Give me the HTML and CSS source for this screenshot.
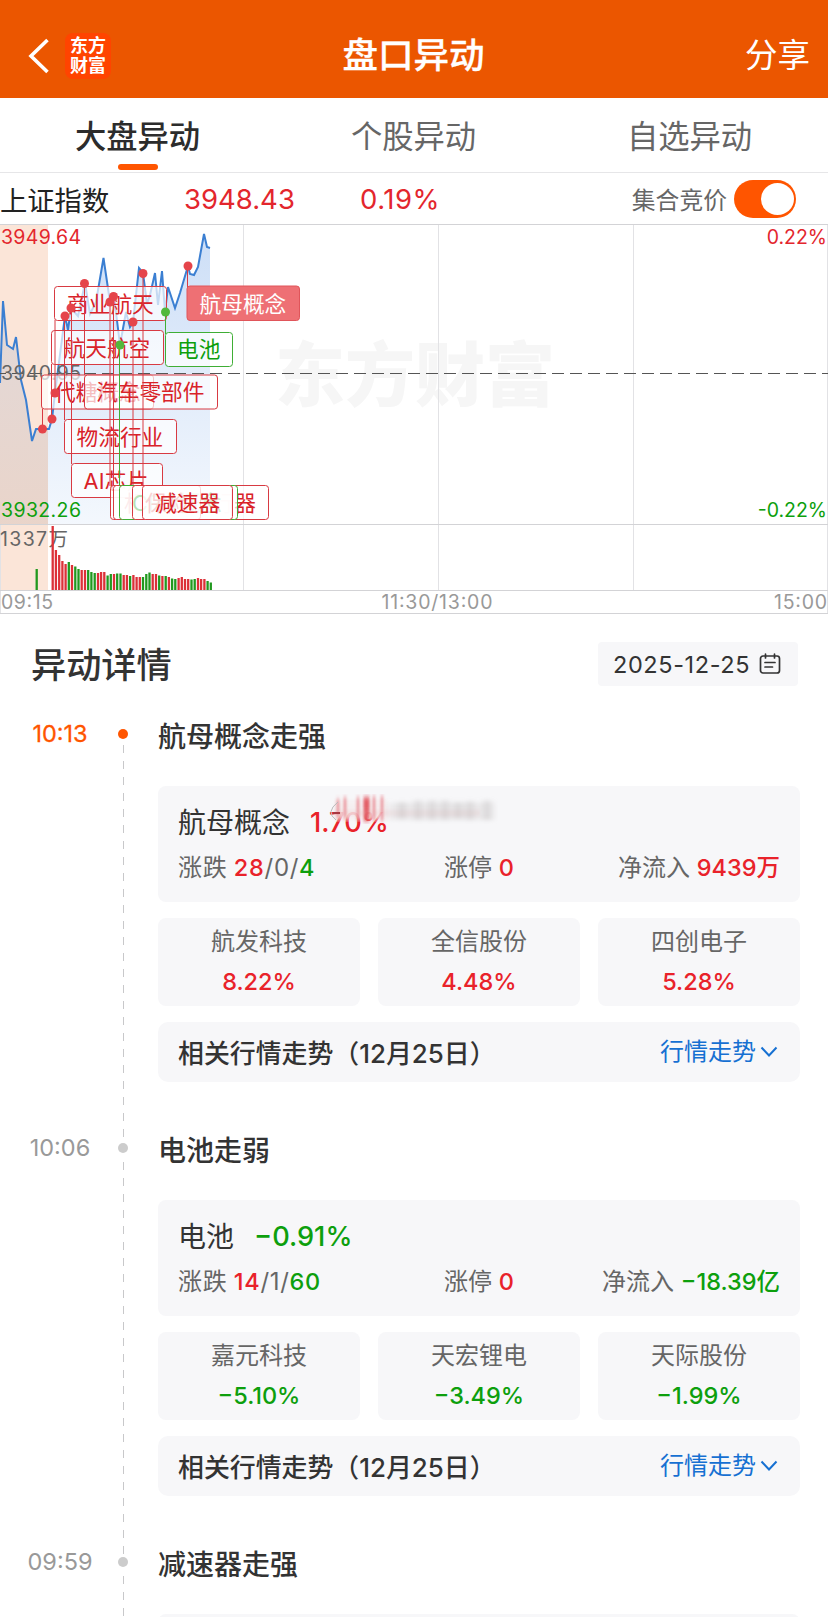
FILE: index.html
```html
<!DOCTYPE html>
<html lang="zh-CN">
<head>
<meta charset="utf-8">
<title>盘口异动</title>
<link rel="stylesheet" href="styles.css">
</head>
<body>
<header class="topbar">
  <div class="topbar-left">
    <svg class="back" width="22" height="36" viewBox="0 0 22 36"><path d="M20.500 2 4 18l16.500 16" fill="none" stroke="#fff" stroke-width="3.600"/></svg>
    <div class="logo"><span>东方</span><span>财富</span></div>
  </div>
  <h1>盘口异动</h1>
  <div class="share">分享</div>
</header>
<nav class="tabs">
  <div class="tab active">大盘异动</div>
  <div class="tab">个股异动</div>
  <div class="tab">自选异动</div>
</nav>
<section class="quote">
  <span class="index-name">上证指数</span>
  <span class="index-price">3948.43</span>
  <span class="index-pct">0.19%</span>
  <span class="auction">集合竞价</span>
  <span class="toggle"></span>
</section>
<svg class="chart" width="828" height="390" viewBox="0 224 828 390">
  <defs>
    <linearGradient id="area" x1="0" y1="0" x2="0" y2="1">
      <stop offset="0" stop-color="#3f83e0" stop-opacity=".26"/>
      <stop offset="1" stop-color="#3f83e0" stop-opacity=".06"/>
    </linearGradient>
    <linearGradient id="bandshade" x1="0" y1="0" x2="0" y2="1">
      <stop offset="0" stop-color="#c9ccd8" stop-opacity=".5"/>
      <stop offset="1" stop-color="#d8c4bc" stop-opacity=".5"/>
    </linearGradient>
  </defs>
  <text class="watermark" x="275" y="401" textLength="280">东方财富</text>
  <path d="M0 225H48V590H0Z" fill="#fbe5d8"/>
  <g stroke="#e2e2e5" fill="none">
    <path d="M243.500 224V590M438.500 224V590M633.500 224V590M.500 524V613M827.500 224V613"/>
    <path stroke="#d3d3d6" d="M0 224.500H828M0 524.500H828M0 590.500H828M0 613.500H828"/>
  </g>
  <path d="M0 383 3 301 7 345 13 349 16 337 21 380 26 400 32 441 36 429H48V524H0Z" fill="url(#bandshade)"/>
  <path d="M48 429 52 419 55 393 65 316 68 330 71 308 78 316 85 283 90 314 96 302 103.500 258 110 302 114 296 120 345 126 312 130 327 133 322 139 268 143 273 147 304 150 295 155 273 158 305 162 271 165 312 168 287 175 308 180 293 188 266 190 274 194 275 198 267 204 234 207 247 210 248V524H48Z" fill="url(#area)"/>
  <path d="M0 383 3 301 7 345 13 349 16 337 21 380 26 400 32 441 36 429H49L52 419 55 393 65 316 68 330 71 308 78 316 85 283 90 314 96 302 103.500 258 110 302 114 296 120 345 126 312 130 327 133 322 139 268 143 273 147 304 150 295 155 273 158 305 162 271 165 312 168 287 175 308 180 293 188 266 190 274 194 275 198 267 204 234 207 247 210 248" fill="none" stroke="#3b7fd2" stroke-width="2"/>
  <path d="M-6 373.500H828" stroke="#555" stroke-dasharray="12 6"/>
  <text class="axis grey" x="1" y="380" textLength="80">3940.95</text>
  <text class="axis red" x="1" y="244" textLength="80">3949.64</text>
  <text class="axis green" x="1" y="517" textLength="80">3932.26</text>
  <text class="axis red" x="827" y="244" text-anchor="end">0.22%</text>
  <text class="axis green" x="827" y="517" text-anchor="end">-0.22%</text>
  <text class="axis grey" x="0" y="546" textLength="68">1337万</text>
  <text class="axis light" x="1" y="609" textLength="52">09:15</text>
  <text class="axis light" x="437" y="609" text-anchor="middle" textLength="111">11:30/13:00</text>
  <text class="axis light" x="827" y="609" text-anchor="end" textLength="53">15:00</text>

  <g class="tag">
    <rect x="54.500" y="286.500" width="112" height="34" rx="3"/><text x="67" y="312">商业航天</text>
    <rect x="51.500" y="330.500" width="112" height="34" rx="3"/><text x="63.500" y="356">航天航空</text>
    <rect x="41.500" y="375" width="112" height="34" rx="3"/><text x="54" y="400">代糖概念</text>
    <rect x="84.500" y="375" width="133" height="34" rx="3"/><text x="96" y="400">汽车零部件</text>
    <rect x="64.500" y="419.500" width="112" height="34" rx="3"/><text x="76.500" y="445">物流行业</text>
    <rect x="71.500" y="463.500" width="91" height="34" rx="3"/><text x="83.500" y="489" textLength="65">AI芯片</text>
  </g>
  <path d="M42.500 429V409M51.500 419V364M55 393V320M64.500 316V420M71.500 308V464M84.500 283V375M110 302V486M113.500 296V486M133 322V486M143 273V486M187.500 266V287" fill="none" stroke="#d83a42"/>
  <g class="tag">
    <rect x="110.500" y="485.500" width="158" height="34" rx="3"/><text x="124" y="511" textLength="132">机器人执行器</text>
    <rect x="113.500" y="485.500" width="118" height="34" rx="3"/>
    <g class="tag falling"><rect x="119.500" y="485.500" width="118" height="34" rx="3"/><text x="132" y="511">CRO概念</text></g>
    <rect x="132.500" y="485.500" width="68" height="34" rx="3"/><text x="145" y="511">保险</text>
    <rect class="solid-tag" x="142.500" y="485.500" width="90" height="34" rx="3"/><text x="155" y="511">减速器</text>
  </g>
  <path d="M119.500 345V486M165.500 312V334" stroke="#3fae35"/>
  <g class="tag falling"><rect x="165.500" y="332.500" width="67" height="34" rx="3"/><text x="177" y="357">电池</text></g>
  <rect x="187" y="286" width="112.500" height="34.500" rx="3" fill="#ee7074" stroke="#e0555a"/><text class="hot" x="199.500" y="311.500">航母概念</text>
  <g fill="#e5444a">
    <circle cx="42.500" cy="429" r="4.500"/><circle cx="52" cy="419" r="4.500"/><circle cx="55" cy="393" r="4.500"/><circle cx="65" cy="316" r="4.500"/><circle cx="71" cy="308" r="4.500"/><circle cx="84.500" cy="283.500" r="4.500"/><circle cx="110" cy="302" r="4.500"/><circle cx="113.500" cy="296.500" r="4.500"/><circle cx="133" cy="322" r="4.500"/><circle cx="143" cy="273.500" r="4.500"/><circle cx="188" cy="266" r="4.500"/>
  </g>
  <g fill="#52b83c"><circle cx="120" cy="345" r="4.500"/><circle cx="165.500" cy="312" r="4.500"/></g>

  <g fill="none" stroke-width="2.300">
    <path stroke="#dc3138" d="M52.700 590V526M55.900 590V550M59.200 590V555M62.400 590V561M65.600 590V564M72 590V565M81.700 590V570M85 590V570M98 590V573M101.100 590V572M104.300 590V572M114 590V574M123.700 590V575M126.900 590V575M133.400 590V575M136.600 590V577M139.800 590V577M152.700 590V574M156 590V574M162.400 590V576M168.900 590V577M178.600 590V578M181.800 590V577M185 590V579M188.200 590V579M198 590V578M201.100 590V579M204.400 590V579"/>
    <path stroke="#21991f" d="M36.700 590V569M68.800 590V562M75.300 590V566.500M78.500 590V569M88.200 590V570M91.400 590V572M94.700 590V573M107.600 590V575.500M110.800 590V574M117.200 590V573.500M120.500 590V573.500M130.100 590V576M143 590V577M146.300 590V574M149.500 590V572.500M159.200 590V575.500M165.700 590V576M172.100 590V578.500M175.300 590V579M191.500 590V579.500M194.700 590V579M207.600 590V581M210.800 590V582.500"/>
  </g>
</svg>

<main>
  <div class="section-head">
    <h2>异动详情</h2>
    <div class="date"><span>2025-12-25</span>
      <svg width="22" height="22" viewBox="0 0 22 22" fill="none" stroke="#333" stroke-width="1.700" stroke-linecap="round"><rect x="1.500" y="3" width="19" height="17" rx="2.500"/><path d="M6.500 1.200V5M15.500 1.200V5M6 9.500H16M6 14H13.500"/></svg>
    </div>
  </div>

  <article class="event first">
    <time>10:13</time><i class="dot"></i>
    <div class="event-body">
      <h3>航母概念走强</h3>
      <div class="card">
        <div class="card-name">航母概念<b class="up">1.70%</b></div>
        <svg class="smudge" width="170" height="32" viewBox="328 794 170 32">
          <defs>
            <filter id="soft" x="-10%" y="-10%" width="120%" height="120%"><feGaussianBlur stdDeviation="1.300 2.600"/></filter>
            <filter id="softer" x="-10%" y="-20%" width="120%" height="140%"><feGaussianBlur stdDeviation="3 2"/></filter>
          </defs>
          <path d="M334 800H388V820H334Z" fill="#f5eff0" opacity=".85" filter="url(#soft)"/>
          <g filter="url(#soft)">
            <path d="M338 799V819M345 797V819M358 797V821M374 796V821M382 796V821" stroke="#e4505a" stroke-width="3" opacity=".5"/>
            <path d="M366.500 797V821" stroke="#dc2430" stroke-width="6" opacity=".7"/>
            <path d="M334 813H480" stroke="#e58d92" stroke-width="2" opacity=".4"/>
          </g>
          <g filter="url(#softer)">
            <path d="M388 803H494V820H388Z" fill="#c9c5c5" opacity=".25"/>
            <path d="M402 802V819M418 800V820M432 800V820M445 800V820M458 802V819M470 801V820M487 800V820" stroke="#aaa5a5" stroke-width="7" opacity=".28"/>
          </g>
          <path d="M338 802Q325 812 336 820" fill="none" stroke="#bbb"/><path d="M333 813H340" stroke="#a83942" stroke-width="2"/>
        </svg>
        <div class="stats"><span>涨跌 <b class="up">28</b>/0/<b class="down">4</b></span><span>涨停 <b class="up">0</b></span><span>净流入 <b class="up">9439万</b></span></div>
      </div>
      <div class="stocks">
        <div class="stock">航发科技<b class="up">8.22%</b></div>
        <div class="stock">全信股份<b class="up">4.48%</b></div>
        <div class="stock">四创电子<b class="up">5.28%</b></div>
      </div>
      <div class="related"><span class="related-title">相关行情走势（12月25日）</span><span class="more">行情走势<svg width="18" height="12" viewBox="0 0 18 12"><path d="M1.500 1.500 9 9.500l7.500-8" fill="none" stroke="#1670d2" stroke-width="2"/></svg></span></div>
    </div>
  </article>

  <article class="event">
    <time>10:06</time><i class="dot"></i>
    <div class="event-body">
      <h3>电池走弱</h3>
      <div class="card">
        <div class="card-name">电池<b class="down">−0.91%</b></div>
        <div class="stats"><span>涨跌 <b class="up">14</b>/1/<b class="down">60</b></span><span>涨停 <b class="up">0</b></span><span>净流入 <b class="down">−18.39亿</b></span></div>
      </div>
      <div class="stocks">
        <div class="stock">嘉元科技<b class="down">−5.10%</b></div>
        <div class="stock">天宏锂电<b class="down">−3.49%</b></div>
        <div class="stock">天际股份<b class="down">−1.99%</b></div>
      </div>
      <div class="related"><span class="related-title">相关行情走势（12月25日）</span><span class="more">行情走势<svg width="18" height="12" viewBox="0 0 18 12"><path d="M1.500 1.500 9 9.500l7.500-8" fill="none" stroke="#1670d2" stroke-width="2"/></svg></span></div>
    </div>
  </article>

  <article class="event last">
    <time>09:59</time><i class="dot"></i>
    <div class="event-body">
      <h3>减速器走强</h3>
      <div class="card"></div>
    </div>
  </article>
</main>
</body>
</html>
```

FILE: styles.css
```css
* { box-sizing: border-box; }
html, body { margin: 0; height: 1617px; overflow: hidden; }
body {
  background: #fff;
  color: #333;
  font-family: Inter, "Noto Sans CJK SC", sans-serif;
  width: 828px;
}
h1, h2, h3 { margin: 0; font-weight: 500; }
b { font-weight: 500; }
.up { color: #e9222a; }
.down { color: #0d9f0d; }

.topbar {
  height: 98px;
  padding: 13px 18px 0 27px;
  background: #eb5600;
  color: #fff;
  display: grid;
  grid-template-columns: 1fr auto 1fr;
  align-items: center;
}
.topbar-left { display: flex; align-items: center; gap: 16px; }
.back { display: block; }
.logo {
  width: 46px;
  height: 46px;
  border-radius: 8px;
  background: #ff4400;
  display: flex;
  flex-direction: column;
  align-items: center;
  justify-content: center;
  font-size: 18px;
  font-weight: 700;
  line-height: 19.500px;
}
.topbar h1 { font-size: 35.500px; line-height: 50px; margin-right: 10px; -webkit-text-stroke: .3px #fff; }
.share { justify-self: end; font-size: 32.500px; line-height: 50px; }

.tabs {
  height: 75px;
  border-bottom: 1px solid #e6e6e8;
  display: grid;
  grid-template-columns: repeat(3, 1fr);
  text-align: center;
  color: #666;
}
.tab { font-size: 31.300px; line-height: 78px; text-indent: -1px; }
.tab.active { color: #2c2c2c; font-weight: 500; }
.tab.active::after {
  content: "";
  display: block;
  width: 40px;
  height: 6px;
  margin: -12px auto 0;
  border-radius: 3px;
  background: #ff5500;
}

.quote {
  height: 51px;
  display: grid;
  grid-template-columns: 183px 176px 1fr auto 62px;
  align-items: center;
  padding: 0 32px 0 1px;
  color: #e3262d;
  font-size: 27.500px;
}
.index-name { color: #222; font-size: 27.300px; text-indent: -1px; }
.index-pct { letter-spacing: .5px; }
.auction { color: #666; font-size: 23.800px; margin-right: 7px; }
.toggle {
  height: 38px;
  border-radius: 19px;
  background: #ff5500;
  padding: 3px 2px;
  display: flex;
  justify-content: flex-end;
}
.toggle::after { content: ""; width: 33px; height: 32px; border-radius: 50%; background: #fff; }

.chart { display: block; }
.axis { font-size: 19.500px; }
.grey { fill: #666; }
.light { fill: #999; }
.red { fill: #e3262d; }
.green { fill: #0d9f0d; }
.watermark { font-size: 70px; font-weight: 900; fill: #f6f6f6; }
.tag rect { fill: #fff; fill-opacity: .7; stroke: #d83a42; }
.tag .solid-tag { fill-opacity: .8; }
.tag text { fill: #d92229; font-size: 21.700px; }
.tag.falling rect { stroke: #3fae35; }
.tag.falling text { fill: #0d9f0d; }
.hot { fill: #fff; font-size: 21.700px; }

.section-head {
  height: 72px;
  padding: 0 30px 0 31px;
  display: flex;
  align-items: flex-end;
  justify-content: space-between;
}
.section-head h2 { font-size: 35.200px; line-height: 42px; }
.date {
  width: 200px;
  height: 44px;
  border-radius: 4px;
  background: #f7f7f9;
  padding: 0 17px 0 15px;
  display: flex;
  align-items: center;
  justify-content: space-between;
  font-size: 23.500px;
  letter-spacing: .6px;
}

.event {
  height: 414px;
  display: grid;
  grid-template-columns: 118px 10px 672px;
  position: relative;
}
.event.last { height: 103px; overflow: hidden; }
.event::before {
  content: "";
  position: absolute;
  left: 123px;
  top: 62px;
  height: 392px;
  width: 1px;
  background: repeating-linear-gradient(#c8c8ca 0 8px, transparent 8px 16px);
}
.event.first::before { top: 59px; }
.event time { padding: 33px 0 0 2px; line-height: 30px; text-align: center; color: #999; font-size: 23.500px; }
.first time { color: #ff5500; -webkit-text-stroke: .3px #ff5500; }
.dot { width: 10px; height: 10px; margin-top: 43px; border-radius: 50%; background: #ccc; position: relative; }
.first .dot { background: #ff5500; }
.event-body { padding: 31px 0 0 30px; }
.event-body h3 { font-size: 28px; line-height: 40px; height: 69px; }
.card { height: 116px; border-radius: 8px; background: #f7f7f9; padding: 17px 20px 0; position: relative; }
.card-name { font-size: 28px; line-height: 40px; display: flex; gap: 20px; }
.card-name b { font-size: 27.200px; }
.smudge { position: absolute; left: 170px; top: 8px; }
.stats { margin-top: 9px; display: grid; grid-template-columns: 1fr auto 1fr; font-size: 24px; line-height: 32px; color: #666; }
.stats span:last-child { justify-self: end; }
.stats span:first-child { letter-spacing: .7px; word-spacing: -1px; }
.stats b { font-size: 23.500px; }
.stocks { margin: 16px 0; display: grid; grid-template-columns: repeat(3, 1fr); gap: 18px; }
.stock { height: 88px; border-radius: 8px; background: #f7f7f9; color: #666; font-size: 24px; line-height: 36px; padding-top: 6px; text-align: center; }
.stock b { display: block; line-height: 44px; font-size: 23.500px; }
.related { height: 60px; border-radius: 10px; background: #f7f7f9; padding: 0 22px 0 20px; display: flex; align-items: center; justify-content: space-between; }
.related-title { font-size: 25.900px; font-weight: 500; margin-bottom: 2px; }
.more { display: flex; align-items: center; gap: 4px; color: #1670d2; font-size: 24px; line-height: 34px; }
```
